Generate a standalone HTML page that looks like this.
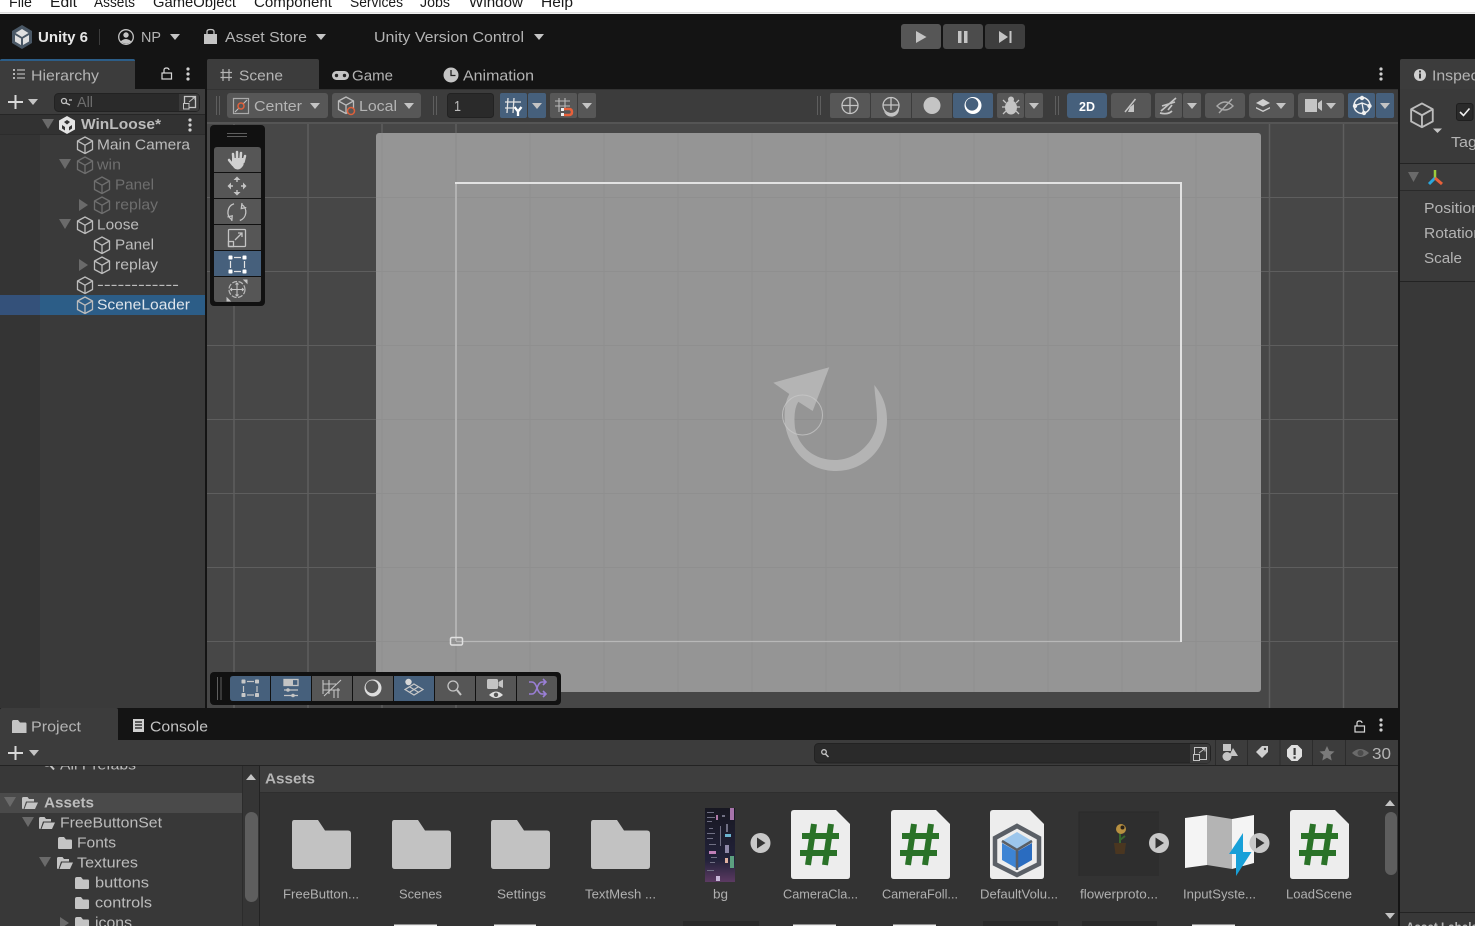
<!DOCTYPE html>
<html><head><meta charset="utf-8"><title>Unity 6</title>
<style>
html,body{margin:0;padding:0;background:#141414;width:1475px;height:926px;overflow:hidden}
svg{display:block;position:absolute;left:0;top:0}
text{font-family:"Liberation Sans",sans-serif;font-size:15px;fill:#bcbcbc}
.b{font-weight:bold}
.d{fill:#6e6e6e}
.m{fill:#1a1a1a;font-size:14.5px}
.t{fill:#b4b4b4}
.l{font-size:12.5px;fill:#b0b0b0}
.s{fill:none;stroke:#c4c4c4;stroke-width:1.3}
.w{fill:none;stroke:#e4e4e4;stroke-width:1.5}
.f{fill:#c4c4c4}
</style></head><body>
<svg width="1475" height="926" viewBox="0 0 1475 926" xmlns="http://www.w3.org/2000/svg">
<defs>
<g id="cube" fill="none" stroke="#bcbcbc" stroke-width="1.300" stroke-linejoin="round"><path d="M9 1 L16.500 5 V13.500 L9 17.500 L1.500 13.500 V5 Z"/><path d="M1.500 5 L9 9.200 L16.500 5 M9 9.200 V17.500"/></g>
<g id="cubed" fill="none" stroke="#6e6e6e" stroke-width="1.300" stroke-linejoin="round"><path d="M9 1 L16.500 5 V13.500 L9 17.500 L1.500 13.500 V5 Z"/><path d="M1.500 5 L9 9.200 L16.500 5 M9 9.200 V17.500"/></g>
<path id="dn" d="M0 0 H10 L5 6 Z" fill="#c4c4c4"/>
<path id="dnd" d="M0 0 H12 L6 10 Z" fill="#6a6a6a"/>
<path id="rt" d="M0 0 V12 L9 6 Z" fill="#6a6a6a"/>
<g id="keb" fill="#d0d0d0"><circle cx="0" cy="-5" r="1.600"/><circle cx="0" cy="0" r="1.600"/><circle cx="0" cy="5" r="1.600"/></g>
<g id="lock" fill="none" stroke="#d8d8d8" stroke-width="1.200"><rect x="-5" y="0" width="9.500" height="6"/><path d="M-3 0 V-3 Q-3 -5 -0.500 -5 Q2 -5 2 -3"/></g>
<path id="folderS" d="M0 2 Q0 0 2 0 H6 L8 2.500 H13 Q14 2.500 14 4 V11 Q14 12 13 12 H1 Q0 12 0 11 Z" fill="#c4c4c4"/>
<path id="folderO" d="M0 11 V1.500 Q0 0 1.500 0 H5.500 L7 2 H12 V4.500 H4 L1.500 12 H1 Q0 12 0 11 Z M5 5.500 H16 L13 12 H2.500 Z" fill="#c4c4c4"/>
<path id="folderB" d="M2 0 H26 L33 10.500 H56 Q59 10.500 59 13.500 V46 Q59 49 56 49 H3 Q0 49 0 46 V3 Q0 0 2 0 Z" fill="#c2c2c2"/>
<g id="script"><path d="M3 0 H45 L59 14 V66 Q59 69 56 69 H3 Q0 69 0 66 V3 Q0 0 3 0 Z" fill="#ededed"/><path d="M23 14 L17 55 M40 14 L34 55 M11 26 H48 M9 43 H46" stroke="#2a7228" stroke-width="6" fill="none"/></g>
<g id="playc"><circle r="10" fill="#c8c8c8"/><path d="M-3.500 -5.500 V5.500 L5 0 Z" fill="#333"/></g>
<g id="handle"><rect x="0" y="0" width="4" height="4" rx=".8" fill="#fff"/></g>
<clipPath id="canvasClip"><rect x="376" y="133" width="885" height="559"/></clipPath>
<clipPath id="sceneClip"><rect x="207" y="123" width="1191" height="585"/></clipPath>
<clipPath id="treeClip"><rect x="0" y="766" width="260" height="160"/></clipPath>
<clipPath id="inspClip"><rect x="1400" y="59" width="75" height="867"/></clipPath>
<linearGradient id="bgg" x1="0" y1="0" x2="0" y2="1"><stop offset="0" stop-color="#181822"/><stop offset=".7" stop-color="#22223a"/><stop offset="1" stop-color="#5c3a62"/></linearGradient>
</defs>

<rect width="1475" height="926" fill="#141414"/>
<!-- menu bar -->
<rect width="1475" height="12.700" fill="#fff"/><rect y="12.700" width="1475" height="1.300" fill="#efefef"/>
<text class="m" x="9" y="7" textLength="23" lengthAdjust="spacingAndGlyphs">File</text>
<text class="m" x="50" y="7" textLength="27" lengthAdjust="spacingAndGlyphs">Edit</text>
<text class="m" x="94" y="7" textLength="41" lengthAdjust="spacingAndGlyphs">Assets</text>
<text class="m" x="153" y="7" textLength="83" lengthAdjust="spacingAndGlyphs">GameObject</text>
<text class="m" x="254" y="7" textLength="78" lengthAdjust="spacingAndGlyphs">Component</text>
<text class="m" x="350" y="7" textLength="53" lengthAdjust="spacingAndGlyphs">Services</text>
<text class="m" x="420" y="7" textLength="30" lengthAdjust="spacingAndGlyphs">Jobs</text>
<text class="m" x="469" y="7" textLength="54" lengthAdjust="spacingAndGlyphs">Window</text>
<text class="m" x="541" y="7" textLength="32" lengthAdjust="spacingAndGlyphs">Help</text>

<!-- top toolbar -->
<path d="M22 25 L32 31 V43 L22 49 L12 43 V31 Z" fill="#4a5866"/>
<path d="M22 29 L28.500 33 L22 37 L15.500 33 Z M15 35 L21 38.500 V45 L15 41.500 Z M29 35 L23 38.500 V45 L29 41.500 Z" fill="#e0e0e0"/>
<text class="b" x="38" y="42" style="fill:#e6e6e6" textLength="50" lengthAdjust="spacingAndGlyphs">Unity 6</text>
<rect x="99" y="29" width="1" height="16" fill="#3c3c3c"/>
<circle cx="126" cy="37" r="7.300" class="s"/><circle cx="126" cy="35" r="2.700" class="f"/><path d="M120.500 41.500 Q126 36.500 131.500 41.500 Q126 45.500 120.500 41.500 Z" class="f"/>
<text class="t" x="141" y="42" textLength="20" lengthAdjust="spacingAndGlyphs">NP</text>
<use href="#dn" x="170" y="34"/>
<path d="M204 34 H217 V44 H204 Z" class="f"/><path d="M207 34 V31.500 Q207 29.500 210.500 29.500 Q214 29.500 214 31.500 V34" class="s"/>
<text class="t" x="225" y="42" textLength="82" lengthAdjust="spacingAndGlyphs">Asset Store</text>
<use href="#dn" x="316" y="34"/>
<text class="t" x="374" y="42" textLength="150" lengthAdjust="spacingAndGlyphs">Unity Version Control</text>
<use href="#dn" x="534" y="34"/>
<rect x="901" y="24" width="40" height="25" rx="3" fill="#565656"/>
<rect x="943" y="24" width="40" height="25" rx="3" fill="#4c4c4c"/>
<rect x="985" y="24" width="40" height="25" rx="3" fill="#3e3e3e"/>
<path d="M916 31 V43 L926.500 37 Z" class="f"/>
<rect x="958" y="31" width="3.500" height="12" class="f"/><rect x="964" y="31" width="3.500" height="12" class="f"/>
<path d="M999 31 V43 L1008 37 Z" class="f"/><rect x="1009.500" y="31" width="2" height="12" class="f"/>

<!-- hierarchy -->
<path d="M0 89 V61 Q0 59 2 59 H133 Q135 59 135 61 V89 Z" fill="#3c3c3c"/>
<path d="M0 61 Q0 59 2 59 H133 Q135 59 135 61 Z" fill="#2c5d87"/>
<rect x="0" y="89" width="205" height="25" fill="#3c3c3c"/>
<rect x="0" y="114" width="205" height="594" fill="#3a3a3a"/>
<rect x="0" y="114" width="40" height="594" fill="#343434"/>
<rect x="0" y="114" width="205" height="20" fill="#323232"/>
<rect x="0" y="114" width="205" height="1" fill="#262626"/>
<rect x="0" y="134" width="205" height="1" fill="#2c2c2c"/>
<rect x="0" y="295" width="40" height="20" fill="#34517a"/>
<rect x="40" y="295" width="165" height="20" fill="#2c5d87"/>
<path d="M13 69 H15 V71 H13 Z M13 73 H15 V75 H13 Z M13 77 H15 V79 H13 Z" fill="#b4b4b4"/>
<path d="M17 70 H25 M17 74 H25 M17 78 H25" stroke="#b4b4b4" stroke-width="1.200"/>
<text class="t" x="31" y="80.500" textLength="68" lengthAdjust="spacingAndGlyphs">Hierarchy</text>
<use href="#lock" x="167" y="73"/>
<use href="#keb" x="188" y="74"/>
<path d="M8 102 H23 M15.500 95 V109" stroke="#d8d8d8" stroke-width="2"/>
<use href="#dn" x="28" y="99"/>
<rect x="54.500" y="93.500" width="145" height="18" rx="4" fill="#2a2a2a" stroke="#222"/>
<path d="M179 94 H196 Q199 94 199 97 V108 Q199 111 196 111 H179 Z" fill="#3a3a3a"/>
<rect x="184.500" y="96.500" width="11" height="11" class="s" stroke-width="1"/><rect x="183.500" y="103.500" width="5.500" height="5.500" class="s" style="fill:#3a3a3a;stroke-width:1"/><path d="M189 102 L195 97 M192 97 H195 V100" class="s" style="stroke-width:1"/>
<circle cx="64" cy="101" r="2.500" class="s"/><path d="M66 103 L70 105 M69 100 H72" class="s"/>
<text class="d" x="77" y="107" textLength="16" lengthAdjust="spacingAndGlyphs">All</text>

<use href="#dnd" x="42" y="119"/>
<path d="M67 116 L75 120.500 V129.500 L67 134 L59 129.500 V120.500 Z" fill="#e4e4e4"/>
<path d="M67 120 L70 122 L67 124.500 L64 122 Z M62 125 L65 127 V130.500 L62 128.500 Z M72 125 L69 127 V130.500 L72 128.500 Z" fill="#323232"/>
<text class="b" x="81" y="129" textLength="80" lengthAdjust="spacingAndGlyphs">WinLoose*</text>
<use href="#keb" x="190" y="125"/>

<use href="#cube" x="76" y="136"/><text x="97" y="149.500" textLength="93" lengthAdjust="spacingAndGlyphs">Main Camera</text>
<use href="#dnd" x="59" y="159"/><use href="#cubed" x="76" y="156"/><text class="d" x="97" y="169.500" textLength="24" lengthAdjust="spacingAndGlyphs">win</text>
<use href="#cubed" x="93" y="176"/><text class="d" x="115" y="189.500" textLength="39" lengthAdjust="spacingAndGlyphs">Panel</text>
<use href="#rt" x="79" y="199"/><use href="#cubed" x="93" y="196"/><text class="d" x="115" y="209.500" textLength="43" lengthAdjust="spacingAndGlyphs">replay</text>
<use href="#dnd" x="59" y="219"/><use href="#cube" x="76" y="216"/><text x="97" y="229.500" textLength="42" lengthAdjust="spacingAndGlyphs">Loose</text>
<use href="#cube" x="93" y="236"/><text x="115" y="249.500" textLength="39" lengthAdjust="spacingAndGlyphs">Panel</text>
<use href="#rt" x="79" y="259"/><use href="#cube" x="93" y="256"/><text x="115" y="269.500" textLength="43" lengthAdjust="spacingAndGlyphs">replay</text>
<use href="#cube" x="76" y="276"/><text x="97" y="289.500" textLength="82" lengthAdjust="spacingAndGlyphs">------------</text>
<use href="#cube" x="76" y="296"/><text x="97" y="309.500" style="fill:#dfe5eb" textLength="93" lengthAdjust="spacingAndGlyphs">SceneLoader</text>

<!-- scene tabs -->
<path d="M207 89 V61 Q207 59 209 59 H317 Q319 59 319 61 V89 Z" fill="#3c3c3c"/>
<path d="M223 69 V81 M229 69 V81 M220.500 72.500 H232 M220.500 77.500 H232" stroke="#b4b4b4" stroke-width="1.200"/>
<text class="t" x="239" y="80.500" textLength="44" lengthAdjust="spacingAndGlyphs">Scene</text>
<rect x="332" y="71" width="17" height="9" rx="4.500" fill="#c4c4c4"/><circle cx="336.500" cy="75.500" r="1.700" fill="#222"/><circle cx="344.500" cy="75.500" r="1.700" fill="#222"/>
<text class="t" x="352" y="80.500" textLength="41" lengthAdjust="spacingAndGlyphs">Game</text>
<circle cx="451" cy="75" r="7.500" class="f"/><path d="M451 70 V75.500 H455.500" fill="none" stroke="#222" stroke-width="1.300"/>
<text class="t" x="463" y="80.500" textLength="71" lengthAdjust="spacingAndGlyphs">Animation</text>
<use href="#keb" x="1381" y="74"/>

<!-- scene toolbar -->
<rect x="207" y="89" width="1191" height="34" fill="#3c3c3c"/>
<rect x="207" y="89" width="1191" height="1" fill="#333"/>
<rect x="207" y="122" width="1191" height="2" fill="#555"/>
<g fill="#5e5e5e">
<rect x="216" y="96" width="1" height="19"/><rect x="219" y="96" width="1" height="19"/>
<rect x="433" y="96" width="1" height="19"/><rect x="436" y="96" width="1" height="19"/>
<rect x="817" y="96" width="1" height="19"/><rect x="820" y="96" width="1" height="19"/>
<rect x="1055" y="96" width="1" height="19"/><rect x="1058" y="96" width="1" height="19"/>
</g>
<g fill="#575757">
<rect x="227" y="93" width="101" height="25" rx="3"/>
<rect x="332" y="93" width="89" height="25" rx="3"/>
<rect x="550" y="93" width="27" height="25" rx="2"/>
<rect x="578" y="93" width="18" height="25" rx="2"/>
<rect x="830" y="93" width="40" height="25" rx="2"/>
<rect x="871" y="93" width="40" height="25"/>
<rect x="912" y="93" width="40" height="25"/>
<rect x="997" y="93" width="27" height="25" rx="2"/>
<rect x="1025" y="93" width="18" height="25" rx="2"/>
<rect x="1111" y="93" width="40" height="25" rx="3"/>
<rect x="1155" y="93" width="27" height="25" rx="2"/>
<rect x="1183" y="93" width="18" height="25" rx="2"/>
<rect x="1205" y="93" width="40" height="25" rx="3"/>
<rect x="1249" y="93" width="45" height="25" rx="3"/>
<rect x="1298" y="93" width="46" height="25" rx="3"/>
</g>
<g fill="#46607c">
<rect x="500" y="93" width="27" height="25" rx="2"/>
<rect x="528" y="93" width="18" height="25" rx="2"/>
<rect x="953" y="93" width="40" height="25" rx="2"/>
<rect x="1067" y="93" width="40" height="25" rx="3"/>
<rect x="1348" y="93" width="27" height="25" rx="2"/>
<rect x="1376" y="93" width="18" height="25" rx="2"/>
</g>
<rect x="447.500" y="93.500" width="46" height="24" rx="3" fill="#2a2a2a" stroke="#222"/>
<text x="454" y="111" textLength="7" lengthAdjust="spacingAndGlyphs">1</text>
<!-- center icon -->
<rect x="233.500" y="98.500" width="15" height="15" fill="none" stroke="#aaa" stroke-width="1.200"/><path d="M235 112 L247 100" stroke="#c4c4c4"/><circle cx="241" cy="106" r="3" fill="#575757" stroke="#e0603a" stroke-width="1.500"/>
<text class="t" x="254" y="111" textLength="48" lengthAdjust="spacingAndGlyphs">Center</text>
<use href="#dn" x="310" y="103"/>
<use href="#cube" x="337" y="96"/><circle cx="351" cy="111" r="3.500" fill="#575757" stroke="#e0603a" stroke-width="1.500"/>
<text class="t" x="359" y="111" textLength="38" lengthAdjust="spacingAndGlyphs">Local</text>
<use href="#dn" x="404" y="103"/>
<!-- snap icons -->
<path d="M508 98 L507 113 M514 98 L513 113 M505 102 H521 M505 108 H514" stroke="#e4e4e4" stroke-width="1.300" fill="none"/>
<path d="M514.500 107 L518 111.500 L521.500 107 M518 111 V116" stroke="#fff" stroke-width="2.300" fill="none"/>
<use href="#dn" x="532" y="103"/>
<path d="M559 98 V112 M565 98 V108 M555 101 H570 M555 106 H570" stroke="#b8b8b8" stroke-width="1.100" fill="none"/>
<path d="M564 109 H569 Q572 109 572 112 Q572 115 569 115 H564" fill="none" stroke="#e8603a" stroke-width="2.500"/>
<rect x="561" y="108" width="3" height="3" fill="#eee"/><rect x="561" y="113" width="3" height="3" fill="#eee"/>
<use href="#dn" x="582" y="103"/>
<!-- draw-mode icons -->
<g fill="none" stroke="#c4c4c4" stroke-width="1.300">
<circle cx="850" cy="105.500" r="8"/><path d="M842 105.500 H858 M850 97.500 V113.500"/>
<circle cx="891" cy="105.500" r="8"/><path d="M883 105 H899 M891 97.500 V110"/>
</g>
<path d="M891 113.500 A8 8 0 0 0 898.800 107 A6 6 0 0 1 884 111 A8 8 0 0 0 891 113.500 Z" fill="#c4c4c4"/>
<circle cx="932" cy="105.500" r="8.500" fill="#c4c4c4"/>
<circle cx="973" cy="105.500" r="8.500" fill="#fff"/><circle cx="972" cy="104.300" r="6.300" fill="#46607c"/>
<g fill="#c4c4c4"><ellipse cx="1011" cy="107.500" rx="6" ry="7"/><circle cx="1011" cy="99.500" r="3"/></g>
<path d="M1003 100 L1006 103 M1019 100 L1016 103 M1002 107 H1006 M1020 107 H1016 M1003 114 L1006 111 M1019 114 L1016 111" stroke="#c4c4c4" stroke-width="1.300"/>
<use href="#dn" x="1029" y="103"/>
<text class="b" x="1079" y="111" style="fill:#fff;font-size:13px" textLength="16" lengthAdjust="spacingAndGlyphs">2D</text>
<path d="M1125 112 L1135.500 99" stroke="#c4c4c4" stroke-width="1.500"/><path d="M1130 107 L1134 104 V112 H1128 Z" fill="#c4c4c4"/>
<path d="M1161 111 L1176 98 M1162 106 L1175 102 M1160 113 Q1168 115 1172 111 M1168 110 L1172 105" fill="none" stroke="#c4c4c4" stroke-width="1.700"/>
<use href="#dn" x="1187" y="103"/>
<path d="M1217 106 Q1225 98 1233 106 Q1225 114 1217 106 Z M1219 113 L1232 99" fill="none" stroke="#aaa" stroke-width="1.400"/>
<path d="M1263 99 L1270 103 L1263 106.500 L1256 103 Z M1256 107 L1263 110.500 L1270 107 L1270 108.500 L1263 112 L1256 108.500 Z" fill="#d0d0d0"/>
<use href="#dn" x="1276" y="103"/>
<rect x="1305" y="99" width="12" height="13" fill="#c4c4c4"/><path d="M1318 103 L1322 100 V111 L1318 108 Z" fill="#c4c4c4"/>
<use href="#dn" x="1326" y="103"/>
<circle cx="1362" cy="105.500" r="8" fill="none" stroke="#f0f0f0" stroke-width="1.500"/><path d="M1354 106 L1362 103 L1370 106 M1362 103 L1364 114" fill="none" stroke="#f0f0f0" stroke-width="1.300"/>
<circle cx="1362" cy="98" r="2.200" fill="#f0f0f0"/><circle cx="1355" cy="106" r="2.200" fill="#f0f0f0"/><circle cx="1369.500" cy="106" r="2.200" fill="#f0f0f0"/><circle cx="1364" cy="113" r="2.200" fill="#f0f0f0"/>
<use href="#dn" x="1380" y="103"/>

<!-- scene view -->
<rect x="207" y="124" width="1191" height="584" fill="#474747"/>
<g stroke="#5e5e5e" stroke-width="1" clip-path="url(#sceneClip)">
<path d="M234 124 V708 M308 124 V708 M382 124 V708 M456 124 V708 M1269.500 124 V708 M1343.500 124 V708" stroke-width="1.500"/>
<path d="M207 197.500 H1398 M207 271.500 H1398 M207 345.500 H1398 M207 419.500 H1398 M207 493.500 H1398 M207 567.500 H1398 M207 641.500 H1398"/>
</g>
<rect x="376" y="133" width="885" height="559" rx="3" fill="#959595"/>
<g stroke="#8f8f8f" stroke-width="1" clip-path="url(#canvasClip)">
<path d="M382 133 V692 M530 133 V692 M604 133 V692 M678 133 V692 M752 133 V692 M826 133 V692 M900 133 V692 M974 133 V692 M1048 133 V692 M1122 133 V692 M1196 133 V692"/>
<path d="M376 197.500 H1261 M376 271.500 H1261 M376 345.500 H1261 M376 419.500 H1261 M376 493.500 H1261 M376 567.500 H1261 M376 641.500 H1261"/>
</g>
<path d="M456 133 V183 M456 642 V692" stroke="#8c8c8c"/>
<g fill="none">
<path d="M456 183 V641" stroke="#b2b2b2" stroke-width="2"/>
<path d="M456 641.500 H1181" stroke="#b8b8b8" stroke-width="1.200"/>
<path d="M455 183 H1181 V642" stroke="#e2e2e2" stroke-width="2"/>
</g>
<rect x="450.500" y="637.500" width="12" height="7.500" rx="1.500" fill="none" stroke="#e0e0e0" stroke-width="1.500"/>
<path d="M773.300 382.700 L829.300 367.300 L812.700 411 L798.300 401.700 Q793 410 795 428 C799 448 815 460 835 460 C858 460 877 440 877 419 C877 407 875 397 874.300 385 C884 397 887 408 887 420 C887 449 864 471 836 471 C808 471 789 450 785 424 Q783 405 789.300 394 Z" fill="#b4b4b4"/>
<circle cx="802.500" cy="415" r="20" fill="none" stroke="#c8c8c8" stroke-opacity=".75" stroke-width="1"/>

<!-- left tool overlay -->
<rect x="210" y="125" width="55" height="181" rx="4" fill="#111"/>
<path d="M227 133.500 H247 M227 136.500 H247" stroke="#5e5e5e" stroke-width="1"/>
<g fill="#565656">
<path d="M214 150 Q214 147 217 147 H258 Q261 147 261 150 V172 H214 Z"/>
<rect x="214" y="173" width="47" height="25"/>
<rect x="214" y="199" width="47" height="25"/>
<rect x="214" y="225" width="47" height="25"/>
<path d="M214 277 H261 V299 Q261 302 258 302 H217 Q214 302 214 299 Z"/>
</g>
<rect x="214" y="251" width="47" height="25" fill="#46607c"/>
<!-- hand -->
<g stroke="#d0d0d0" stroke-width="2.500" stroke-linecap="round" fill="none"><path d="M233 154 L233.500 160 M237 152 V160 M241 153 L240.500 160 M245 156 L243.500 162 M229 160 L233 165"/></g>
<path d="M232 158 H244 L243.500 165 Q241 169.500 237.500 169.500 Q233.500 169.500 232 164 Z" fill="#d0d0d0"/>
<!-- move -->
<path d="M237 178 V182 M237 190 V194 M229 186 H233 M241 186 H245" fill="none" stroke="#c4c4c4" stroke-width="1.400"/>
<path d="M237 176.500 L240.500 180 H233.500 Z M237 195.500 L240.500 192 H233.500 Z M227.500 186 L231 182.500 V189.500 Z M246.500 186 L243 182.500 V189.500 Z" fill="#c4c4c4"/>
<!-- rotate -->
<path d="M231.500 219.500 A9 9 0 0 1 234 203.800 M241.500 204.300 A9 9 0 0 1 239.800 220.500 M242 203 L241.300 208.500 L246.300 207.500 M231.800 221 L232.200 215.800 L227.500 217" fill="none" stroke="#c4c4c4" stroke-width="1.300"/>
<!-- scale -->
<rect x="228.500" y="229.500" width="17" height="17" rx="1" class="s" stroke-width="1.200"/><rect x="228.500" y="241.500" width="5" height="5" class="s" stroke-width="1.200"/><path d="M235 240 L242 233 M238 233 H242 V237" class="s" stroke-width="1.200"/>
<!-- rect -->
<use href="#handle" x="228.500" y="255.500"/><use href="#handle" x="242.500" y="255.500"/><use href="#handle" x="228.500" y="269.500"/><use href="#handle" x="242.500" y="269.500"/>
<path d="M234 257.500 H241 M234 271.500 H241 M230.500 261 V268 M244.500 261 V268" stroke="#e4e4e4" stroke-width="1.200"/>
<!-- transform -->
<circle cx="237" cy="289.500" r="8" fill="none" stroke="#b8b8b8" stroke-width="1.200" stroke-dasharray="5 1.500"/>
<path d="M237 283 V296 M230.500 289.500 H243.500 M235.500 284.500 L237 283 L238.500 284.500 M235.500 294.500 L237 296 L238.500 294.500 M232 288 L230.500 289.500 L232 291 M242 288 L243.500 289.500 L242 291" fill="none" stroke="#c4c4c4" stroke-width="1.100"/>
<path d="M247 280 V283 L244 280 Z M227 298 V301 H230 Z" fill="#c4c4c4" stroke="#c4c4c4"/>

<!-- bottom overlay -->
<rect x="210" y="672" width="351" height="33" rx="4" fill="#111"/>
<path d="M217.500 677 V700 M221 677 V700" stroke="#5e5e5e" stroke-width="1"/>
<g fill="#46607c">
<path d="M230 679 Q230 676 233 676 H270 V701 H233 Q230 701 230 698 Z"/>
<rect x="271" y="676" width="40" height="25"/>
<rect x="394" y="676" width="40" height="25"/>
</g>
<g fill="#565656">
<rect x="312" y="676" width="40" height="25"/>
<rect x="353" y="676" width="40" height="25"/>
<rect x="435" y="676" width="40" height="25"/>
<rect x="476" y="676" width="40" height="25"/>
<path d="M517 676 H554 Q557 676 557 679 V698 Q557 701 554 701 H517 Z"/>
</g>
<g fill="#c8c8c8"><rect x="241.500" y="679.500" width="4" height="4" rx=".8"/><rect x="255" y="679.500" width="4" height="4" rx=".8"/><rect x="241.500" y="693" width="4" height="4" rx=".8"/><rect x="255" y="693" width="4" height="4" rx=".8"/></g>
<path d="M247 681.500 H254 M247 695 H254 M243.500 686 V692 M257 686 V692" stroke="#c4c4c4" stroke-width="1.200"/>
<rect x="284" y="679.500" width="14" height="6" class="s"/><rect x="284" y="679.500" width="9" height="6" class="f"/>
<path d="M284 690 H298 M284 695.500 H298" stroke="#c4c4c4" stroke-width="1.200"/><circle cx="288" cy="690" r="1.800" class="f"/><circle cx="293" cy="695.500" r="1.800" class="f"/>
<path d="M323 680 V694 M329 680 V694 M323.500 684 H336 M323.500 690 H340 M324 696 L341 680 M334 690 V698 M338 688 V698" fill="none" stroke="#c4c4c4" stroke-width="1.100"/>
<circle cx="373" cy="688" r="8.500" fill="#ddd"/><circle cx="372" cy="686.800" r="6.300" fill="#565656"/>
<circle cx="408.500" cy="682" r="3.200" fill="#d8d8d8"/>
<path d="M414 684 L423 689.500 L414 695 L405 689.500 Z M409.500 686.800 L418.500 692.300 M418.500 686.800 L409.500 692.300" fill="none" stroke="#c8c8c8" stroke-width="1.200"/>
<circle cx="453" cy="686" r="5" class="s"/><path d="M457 690 L461 695" stroke="#c4c4c4" stroke-width="2"/>
<rect x="487" y="679" width="11" height="10" rx="1.500" class="f"/><path d="M498.500 682 L503 679.500 V688 L498.500 686 Z" class="f"/>
<path d="M489 695 Q496 688 503 695 Q496 701 489 695 Z" fill="#e0e0e0"/><circle cx="496" cy="694.800" r="2.200" fill="#565656"/>
<path d="M529 682 H532 Q535 682 537 688 Q539 694 542 694 H545 M529 694 H532 Q535 694 537 688 Q539 682 542 682 H545 M543 679 L546 682 L543 685 M543 691 L546 694 L543 697" fill="none" stroke="#9a7fd6" stroke-width="1.600"/>

<!-- inspector -->
<path d="M1400 89 V61 Q1400 59 1402 59 H1475 V89 Z" fill="#3c3c3c"/>
<rect x="1400" y="89" width="75" height="837" fill="#3a3a3a"/>
<circle cx="1420" cy="75" r="6" fill="#d0d0d0"/><rect x="1419" y="73.500" width="2" height="5" fill="#3c3c3c"/><rect x="1419" y="70.500" width="2" height="2" fill="#3c3c3c"/>
<text class="t" x="1432" y="80.500" textLength="65" lengthAdjust="spacingAndGlyphs">Inspector</text>
<g transform="translate(1409,102) scale(1.440)"><use href="#cube"/></g>
<path d="M1433 128.500 H1442 L1437.500 133 Z" fill="#c4c4c4"/>
<rect x="1456.500" y="103.500" width="16.500" height="17" rx="2.500" fill="#2a2a2a" stroke="#1e1e1e"/>
<path d="M1460 112 L1463.500 115.500 L1469.500 108.500" fill="none" stroke="#f0f0f0" stroke-width="1.600"/>
<text class="t" x="1451" y="147" textLength="26" lengthAdjust="spacingAndGlyphs">Tag</text>
<rect x="1400" y="163" width="75" height="1" fill="#232323"/>
<rect x="1400" y="164" width="75" height="26" fill="#3c3c3c"/>
<rect x="1400" y="190" width="75" height="1" fill="#2a2a2a"/>
<path d="M1408 172 H1419 L1413.500 182 Z" fill="#6a6a6a"/>
<path d="M1435 170 V178" stroke="#9ccc3c" stroke-width="2.500"/><path d="M1435 178 L1429 184" stroke="#2aa6dc" stroke-width="3"/><path d="M1435 178 L1442 184" stroke="#e8603a" stroke-width="3"/>
<text class="t" x="1424" y="213" textLength="56" lengthAdjust="spacingAndGlyphs">Position</text>
<text class="t" x="1424" y="238" textLength="58" lengthAdjust="spacingAndGlyphs">Rotation</text>
<text class="t" x="1424" y="263" textLength="38" lengthAdjust="spacingAndGlyphs">Scale</text>
<rect x="1400" y="281" width="75" height="1" fill="#232323"/>
<rect x="1400" y="282" width="75" height="644" fill="#383838"/>
<rect x="1400" y="912" width="75" height="1" fill="#232323"/>
<text class="b t" x="1406" y="932" style="font-size:14px" textLength="72" lengthAdjust="spacingAndGlyphs">Asset Labels</text>

<!-- project panel -->
<rect x="0" y="708" width="1398" height="32" fill="#141414"/>
<path d="M0 740 V710 Q0 708 2 708 H116 Q118 708 118 710 V740 Z" fill="#3c3c3c"/>
<path d="M12 722 Q12 720 13.500 720 H18 L20 722.500 H25.500 Q26.500 722.500 26.500 724 V733 H12 Z" fill="#c4c4c4"/>
<text class="t" x="31" y="731.500" textLength="50" lengthAdjust="spacingAndGlyphs">Project</text>
<rect x="133" y="719" width="11" height="13" fill="#d0d0d0"/><path d="M135 722 H142 M135 725 H142 M135 728 H142" stroke="#141414" stroke-width="1.200"/>
<text class="t" x="150" y="731.500" style="fill:#c4c4c4" textLength="58" lengthAdjust="spacingAndGlyphs">Console</text>
<use href="#lock" x="1360" y="726"/>
<use href="#keb" x="1381" y="725"/>

<rect x="0" y="766" width="243" height="160" fill="#383838"/>
<rect x="243" y="766" width="17" height="160" fill="#353535"/>
<rect x="242" y="766" width="1" height="160" fill="#2c2c2c"/>
<rect x="259" y="766" width="1" height="160" fill="#232323"/>
<rect x="260" y="766" width="1138" height="160" fill="#333"/>
<rect x="260" y="766" width="1138" height="26" fill="#3e3e3e"/>
<rect x="260" y="792" width="1138" height="1" fill="#2e2e2e"/>
<rect x="1398" y="708" width="2" height="218" fill="#141414"/>
<g clip-path="url(#treeClip)"><text x="60" y="769.500" style="font-size:14px" textLength="76" lengthAdjust="spacingAndGlyphs">All Prefabs</text><circle cx="47" cy="762" r="4" class="s"/><path d="M50 765 L54 769.500" class="s" style="stroke-width:2"/></g>
<rect x="0" y="793" width="242" height="20" fill="#4a4a4a"/>
<use href="#dnd" x="4" y="797"/><use href="#folderO" x="22" y="797"/>
<text class="b" x="44" y="807.500" textLength="50" lengthAdjust="spacingAndGlyphs">Assets</text>
<use href="#dnd" x="22" y="817"/><use href="#folderO" x="39" y="817"/>
<text x="60" y="827.500" textLength="102" lengthAdjust="spacingAndGlyphs">FreeButtonSet</text>
<use href="#folderS" x="58" y="837"/>
<text x="77" y="847.500" textLength="39" lengthAdjust="spacingAndGlyphs">Fonts</text>
<use href="#dnd" x="39" y="857"/><use href="#folderO" x="57" y="857"/>
<text x="77" y="867.500" textLength="61" lengthAdjust="spacingAndGlyphs">Textures</text>
<use href="#folderS" x="75" y="877"/>
<text x="95" y="887.500" textLength="54" lengthAdjust="spacingAndGlyphs">buttons</text>
<use href="#folderS" x="75" y="897"/>
<text x="95" y="907.500" textLength="57" lengthAdjust="spacingAndGlyphs">controls</text>
<use href="#rt" x="60" y="917"/><use href="#folderS" x="75" y="917"/>
<text x="95" y="927.500" textLength="37" lengthAdjust="spacingAndGlyphs">icons</text>
<path d="M246 780 H256 L251 774 Z" fill="#c4c4c4"/>
<rect x="245" y="812" width="13" height="90" rx="6.500" fill="#5e5e5e"/>

<text class="b t" x="265" y="783.500" textLength="50" lengthAdjust="spacingAndGlyphs">Assets</text>
<use href="#folderB" x="292" y="820"/><use href="#folderB" x="392" y="820"/><use href="#folderB" x="491" y="820"/><use href="#folderB" x="591" y="820"/>
<text class="l" x="283" y="898.500" textLength="76" lengthAdjust="spacingAndGlyphs">FreeButton...</text>
<text class="l" x="399" y="898.500" textLength="43" lengthAdjust="spacingAndGlyphs">Scenes</text>
<text class="l" x="497" y="898.500" textLength="49" lengthAdjust="spacingAndGlyphs">Settings</text>
<text class="l" x="585" y="898.500" textLength="71" lengthAdjust="spacingAndGlyphs">TextMesh ...</text>
<text class="l" x="713" y="898.500" textLength="15" lengthAdjust="spacingAndGlyphs">bg</text>
<text class="l" x="783" y="898.500" textLength="75" lengthAdjust="spacingAndGlyphs">CameraCla...</text>
<text class="l" x="882" y="898.500" textLength="76" lengthAdjust="spacingAndGlyphs">CameraFoll...</text>
<text class="l" x="980" y="898.500" textLength="78" lengthAdjust="spacingAndGlyphs">DefaultVolu...</text>
<text class="l" x="1080" y="898.500" textLength="78" lengthAdjust="spacingAndGlyphs">flowerproto...</text>
<text class="l" x="1183" y="898.500" textLength="73" lengthAdjust="spacingAndGlyphs">InputSyste...</text>
<text class="l" x="1286" y="898.500" textLength="66" lengthAdjust="spacingAndGlyphs">LoadScene</text>

<!-- bg thumb -->
<rect x="705" y="808" width="30" height="74" fill="url(#bgg)"/>
<rect x="730" y="808" width="4" height="12" fill="#a673aa"/><rect x="716" y="815" width="2" height="5" fill="#b07aa8"/>
<rect x="725" y="834" width="6" height="3" fill="#6cb4d0"/><rect x="725" y="845" width="4" height="8" fill="#8e88a8"/>
<rect x="709" y="851" width="7" height="3" fill="#c080b8"/><rect x="730" y="856" width="4" height="12" fill="#5ca080"/>
<rect x="725" y="858" width="3" height="5" fill="#e0b0a0"/><rect x="716" y="876" width="4" height="5" fill="#c8b8d8"/>
<g fill="#707084"><rect x="707" y="812" width="7" height="1"/><rect x="707" y="817" width="8" height="1"/><rect x="707" y="821" width="5" height="1"/><rect x="709" y="828" width="4" height="1"/><rect x="707" y="833" width="8" height="1"/><rect x="707" y="838" width="6" height="1"/><rect x="709" y="844" width="7" height="1"/><rect x="710" y="862" width="5" height="1"/><rect x="720" y="826" width="1" height="20"/><rect x="707" y="870" width="7" height="1"/><rect x="722" y="815" width="3" height="2"/><rect x="726" y="824" width="2" height="8"/><rect x="711" y="857" width="6" height="1"/></g>
<use href="#playc" x="760.500" y="843"/>
<use href="#script" x="791" y="810"/><use href="#script" x="891" y="810"/><use href="#script" x="1290" y="810"/>
<!-- default volume -->
<path d="M993 810 H1030 L1044 824 V876 Q1044 879 1041 879 H993 Q990 879 990 876 V813 Q990 810 993 810 Z" fill="#ededed"/>
<path d="M1017 826 L1039 838 V864 L1017 875 L995 864 V838 Z" fill="none" stroke="#5a5f66" stroke-width="4.500"/>
<path d="M1017 832 L1032 841 L1017 849 L1002 841 Z" fill="#9cc6ec"/><path d="M1002 843 L1016 851 V868 L1002 860 Z" fill="#3d84d4"/><path d="M1032 843 L1018 851 V868 L1032 860 Z" fill="#2a6cc0"/>
<path d="M1002 841 L1017 850 L1032 841 M1017 850 V870" fill="none" stroke="#5a5f66" stroke-width="2.500"/>
<!-- flower -->
<rect x="1079" y="812" width="80" height="64" fill="#2e2e2e"/>
<path d="M1079 876 V812 H1159" fill="none" stroke="#2a2a2a" stroke-width="1"/>
<path d="M1120 833 V844 M1120 840 L1125 836" stroke="#38682e" stroke-width="2" fill="none"/>
<circle cx="1121" cy="829" r="5" fill="#b89040"/><circle cx="1122.500" cy="827.500" r="2" fill="#2a2218"/>
<path d="M1114 843 H1126 L1124.500 854 H1115.500 Z" fill="#4a3620"/>
<use href="#playc" x="1159" y="843"/>
<!-- input map -->
<path d="M1185 818 L1207 815 V865 L1185 868 Z" fill="#f4f4f4"/><path d="M1207 815 L1232 819 V869 L1207 865 Z" fill="#b4b4b4"/><path d="M1232 819 L1254 815 V863 L1232 869 Z" fill="#f4f4f4"/>
<path d="M1243 833 L1229 854 H1236 L1236 876 L1251.500 852 H1243 Z" fill="#18a0d8"/>
<use href="#playc" x="1259.500" y="843"/>
<!-- next row tops -->
<g fill="#2a2a2a"><rect x="683" y="921" width="76" height="5"/><rect x="983" y="921" width="75" height="5"/><rect x="1082" y="921" width="75" height="5"/></g>
<g fill="#ededed"><rect x="394" y="924.500" width="43" height="2"/><rect x="494" y="924.500" width="42" height="2"/><rect x="793" y="924.500" width="43" height="2"/><rect x="893" y="924.500" width="43" height="2"/><rect x="1192" y="924.500" width="43" height="2"/></g>
<path d="M1385 806 H1395 L1390 800 Z" fill="#c4c4c4"/>
<path d="M1385 913 H1395 L1390 919 Z" fill="#c4c4c4"/>
<rect x="1385" y="812" width="12" height="63" rx="6" fill="#5e5e5e"/>

<!-- project toolbar -->
<rect x="0" y="740" width="1398" height="25" fill="#3c3c3c"/>
<rect x="0" y="765" width="1398" height="1" fill="#232323"/>
<path d="M8 753 H23 M15.500 746 V760" stroke="#d8d8d8" stroke-width="2"/>
<use href="#dn" x="29" y="750"/>
<rect x="814.500" y="743.500" width="396" height="19.500" rx="4" fill="#2a2a2a" stroke="#222"/>
<path d="M1190 744 H1207 Q1210 744 1210 747 V760 Q1210 763 1207 763 H1190 Z" fill="#3a3a3a"/>
<rect x="1194.500" y="747.500" width="12" height="12" class="s" style="stroke-width:1"/><rect x="1193.500" y="754.500" width="6" height="6" class="s" style="fill:#3a3a3a;stroke-width:1"/><path d="M1199 753 L1205 748.500 M1202 748.500 H1205 V751.500" class="s" style="stroke-width:1"/>
<circle cx="824" cy="752" r="2.300" class="s"/><path d="M825.500 754 L828.500 757" stroke="#c4c4c4" stroke-width="1.500"/>
<g fill="#2c2c2c"><rect x="1215" y="740" width="1" height="25"/><rect x="1247" y="740" width="1" height="25"/><rect x="1279.500" y="740" width="1" height="25"/><rect x="1312" y="740" width="1" height="25"/><rect x="1345" y="740" width="1" height="25"/></g>
<rect x="1223" y="744" width="8" height="7" class="f"/><circle cx="1227" cy="756.500" r="4.500" class="f"/><path d="M1233 748 L1238 756 H1229 Z" class="f"/>
<path d="M1256 752 L1262 746 H1268 V752 L1262 758 Z" fill="#d0d0d0"/><circle cx="1265" cy="749" r="1.200" fill="#3c3c3c"/>
<path d="M1291.500 745 H1297.500 L1302 749.500 V756.500 L1297.500 761 H1291.500 L1287 756.500 V749.500 Z" fill="#e0e0e0"/><rect x="1293.500" y="748" width="2.200" height="7" fill="#3c3c3c"/><rect x="1293.500" y="756.500" width="2.200" height="2.200" fill="#3c3c3c"/>
<path d="M1327 746 L1329.300 751 L1334.500 751.500 L1330.500 755 L1331.700 760.500 L1327 757.700 L1322.300 760.500 L1323.500 755 L1319.500 751.500 L1324.700 751 Z" fill="#7a7a7a"/>
<path d="M1352 753 Q1360 745 1369 753 Q1360 761 1352 753 Z" fill="#6a6a6a"/><circle cx="1360.500" cy="753" r="3" fill="#4c4c4c"/>
<text class="t" x="1372" y="759" style="font-size:16px" textLength="19" lengthAdjust="spacingAndGlyphs">30</text>
</svg>
</body></html>
